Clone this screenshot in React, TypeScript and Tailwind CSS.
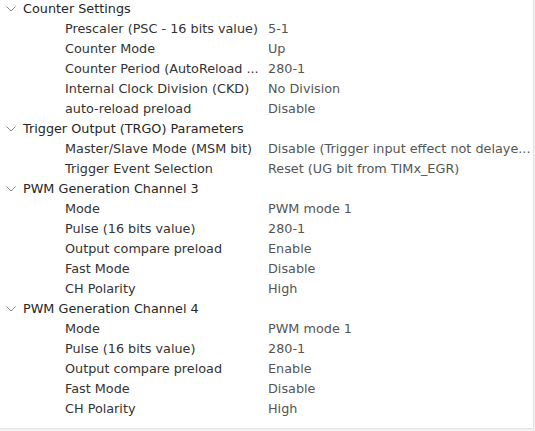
import React from "react";

type Row = [string, string];
type Group = { title: string; rows: Row[] };

const groups: Group[] = [
  {
    title: "Counter Settings",
    rows: [
      ["Prescaler (PSC - 16 bits value)", "5-1"],
      ["Counter Mode", "Up"],
      ["Counter Period (AutoReload ...", "280-1"],
      ["Internal Clock Division (CKD)", "No Division"],
      ["auto-reload preload", "Disable"],
    ],
  },
  {
    title: "Trigger Output (TRGO) Parameters",
    rows: [
      ["Master/Slave Mode (MSM bit)", "Disable (Trigger input effect not delaye..."],
      ["Trigger Event Selection", "Reset (UG bit from TIMx_EGR)"],
    ],
  },
  {
    title: "PWM Generation Channel 3",
    rows: [
      ["Mode", "PWM mode 1"],
      ["Pulse (16 bits value)", "280-1"],
      ["Output compare preload", "Enable"],
      ["Fast Mode", "Disable"],
      ["CH Polarity", "High"],
    ],
  },
  {
    title: "PWM Generation Channel 4",
    rows: [
      ["Mode", "PWM mode 1"],
      ["Pulse (16 bits value)", "280-1"],
      ["Output compare preload", "Enable"],
      ["Fast Mode", "Disable"],
      ["CH Polarity", "High"],
    ],
  },
];

function Chevron() {
  return (
    <svg width="10" height="6" viewBox="0 0 10 6" className="shrink-0">
      <path d="M0.5 0.5 L5 5 L9.5 0.5" fill="none" stroke="#8a8a8a" strokeWidth="1" />
    </svg>
  );
}

export default function App() {
  return (
    <div
      className="w-[535px] h-[431px] bg-[#f2f2f2] overflow-hidden"
      style={{ fontFamily: '"DejaVu Sans", sans-serif' }}
    >
      <div className="w-[534px] h-[429px] bg-white border-r border-b border-[#e3e3e3] overflow-hidden">
        <div className="-mt-[1px] flex flex-col text-[12.8px]">
          {groups.map((g) => (
            <React.Fragment key={g.title}>
              <div className="h-[20px] flex items-center">
                <div className="w-[23px] pl-[6px] flex items-center">
                  <Chevron />
                </div>
                <span className="text-[#262626] whitespace-nowrap">{g.title}</span>
              </div>
              {g.rows.map(([k, v], i) => (
                <div key={i} className="h-[20px] flex items-center">
                  <span className="w-[268px] pl-[65px] shrink-0 text-[#333333] whitespace-nowrap overflow-hidden">
                    {k}
                  </span>
                  <span className="text-[#555555] whitespace-nowrap">{v}</span>
                </div>
              ))}
            </React.Fragment>
          ))}
        </div>
      </div>
    </div>
  );
}
